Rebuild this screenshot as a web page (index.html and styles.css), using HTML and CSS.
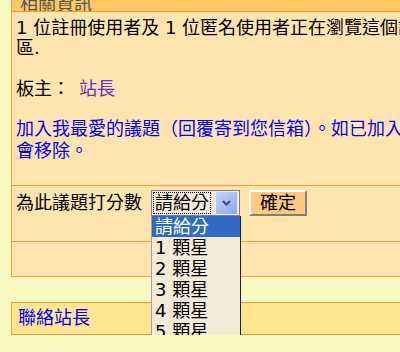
FILE: index.html
```html
<!DOCTYPE html>
<html lang="zh-Hant">
<head>
    <meta charset="UTF-8">
    <title>討論區資訊</title>
    <link rel="stylesheet" href="styles.css">
</head>
<body>
    <div class="board">
        <div class="board-head">相關資訊</div>

        <div class="cell info">
            <p class="stats">1 位註冊使用者及 1 位匿名使用者正在瀏覽這個討論<br>區.</p>
            <p class="mods">板主：<a href="#" class="visited">站長</a></p>
            <p class="fav"><a href="#">加入我最愛的議題（回覆寄到您信箱）。如已加入，再按一次<br>會移除。</a></p>
        </div>

        <div class="cell rate-row">
            <span class="rate-label">為此議題打分數</span>
            <div class="fake-select">
                <span class="fake-value">請給分</span>
                <span class="fake-arrow">
                    <svg width="9" height="6" viewBox="0 0 9 6"><path d="M1 1 L4.5 4.5 L8 1" fill="none" stroke="#3a4a7a" stroke-width="2"/></svg>
                </span>
                <ul class="listbox">
                    <li class="picked">請給分</li>
                    <li>1 顆星</li>
                    <li>2 顆星</li>
                    <li>3 顆星</li>
                    <li>4 顆星</li>
                    <li>5 顆星</li>
                </ul>
            </div>
            <button class="ok-btn">確定</button>
        </div>

        <div class="cell empty-row"></div>
    </div>

    <div class="contact">
        <a href="#">聯絡站長</a>
    </div>
</body>
</html>
```

FILE: styles.css
```css
body {
    margin: 0;
    background-color: #f8f8c0;
    font-family: "DejaVu Sans", "Noto Sans CJK TC", sans-serif;
    font-size: 18px;
    color: #000;
}

a {
    color: #0000ff;
    text-decoration: none;
}

a.visited {
    color: #6633bb;
}

.board {
    margin-left: 11px;
    border-left: 1px solid #f0a030;
    background-color: #ffe4b0;
}

.board-head {
    height: 12px;
    box-sizing: border-box;
    display: flex;
    align-items: flex-end;
    overflow: hidden;
    padding: 0 0 0 8px;
    background-color: #ffc862;
    border-bottom: 1px solid #f0a030;
    color: #555;
    line-height: 14px;
}

.cell {
    border-bottom: 1px solid #f0a030;
    padding-left: 4px;
}

.info {
    padding-top: 6px;
    height: 174px;
    box-sizing: border-box;
    overflow: hidden;
}

.info p {
    margin: 0;
    line-height: 20px;
    white-space: nowrap;
}

.mods {
    margin-top: 21px !important;
}

.mods a {
    margin-left: 9px;
}

.fav {
    margin-top: 19px !important;
    line-height: 22px !important;
}

.rate-row {
    display: flex;
    align-items: center;
    height: 56px;
    box-sizing: border-box;
    padding-top: 4px;
    padding-bottom: 25px;
}

.rate-label {
    width: 135px;
    line-height: 26px;
}

.fake-select {
    position: relative;
    width: 89px;
    height: 26px;
    box-sizing: border-box;
    display: flex;
    align-items: center;
    border: 1px solid #7f7f7f;
    background-color: #f5e9d8;
}

.fake-value {
    margin-left: 1px;
    padding: 0 1px;
    line-height: 20px;
    border: 1px dotted #000;
}

.fake-arrow {
    margin-left: auto;
    margin-right: 2px;
    width: 21px;
    height: 22px;
    display: flex;
    align-items: center;
    justify-content: center;
    background: linear-gradient(135deg, #c6d4fa, #8ea6ee);
}

.listbox {
    position: absolute;
    top: 25px;
    left: -1px;
    width: 90px;
    margin: 0;
    padding: 0;
    list-style: none;
    box-sizing: border-box;
    background-color: #f5e9d8;
    border-left: 1px solid #a0a0a0;
    border-right: 1px solid #222;
    border-bottom: 1px solid #222;
}

.listbox li {
    height: 21px;
    line-height: 21px;
    padding-left: 3px;
}

.listbox li.picked {
    background-color: #316ac5;
    color: #fff;
}

.ok-btn {
    margin-left: 9px;
    width: 58px;
    height: 26px;
    padding: 0;
    font-family: inherit;
    font-size: 18px;
    line-height: 20px;
    background-color: #ffc880;
    border: 2px solid;
    border-color: #fff #808080 #808080 #fff;
}

.empty-row {
    height: 35px;
    box-sizing: border-box;
}

.contact {
    margin: 25px 0 0 11px;
    height: 33px;
    box-sizing: border-box;
    border-left: 1px solid #f0a030;
    border-top: 1px solid #f0a030;
    border-bottom: 1px solid #f0a030;
    background-color: #ffe590;
    padding-left: 6px;
    line-height: 29px;
}
```
